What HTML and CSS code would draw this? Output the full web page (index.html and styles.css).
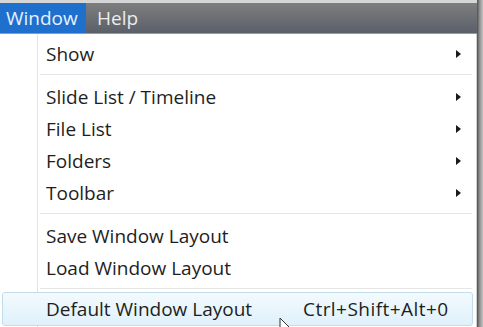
FILE: index.html
```html
<!doctype html>
<html lang="en">
    <head>
        <meta charset="UTF-8">
        <title>Window menu</title>
        <link rel="stylesheet" href="styles.css">
    </head>
    <body>
        <div class="screen">
            <div class="window">
                <div class="menubar">
                    <span class="menubar-item active">Window</span>
                    <span class="menubar-item">Help</span>
                </div>
                <div class="menu">
                    <div class="menu-item">
                        <span class="label">Show</span>
                        <span class="submenu-arrow"></span>
                    </div>
                    <div class="separator"></div>
                    <div class="menu-item">
                        <span class="label">Slide List / Timeline</span>
                        <span class="submenu-arrow"></span>
                    </div>
                    <div class="menu-item">
                        <span class="label">File List</span>
                        <span class="submenu-arrow"></span>
                    </div>
                    <div class="menu-item">
                        <span class="label">Folders</span>
                        <span class="submenu-arrow"></span>
                    </div>
                    <div class="menu-item">
                        <span class="label">Toolbar</span>
                        <span class="submenu-arrow"></span>
                    </div>
                    <div class="separator"></div>
                    <div class="menu-item">
                        <span class="label">Save Window Layout</span>
                    </div>
                    <div class="menu-item">
                        <span class="label">Load Window Layout</span>
                    </div>
                    <div class="separator short"></div>
                    <div class="menu-item hover">
                        <span class="label wide">Default Window Layout</span>
                        <span class="shortcut">Ctrl+Shift+Alt+0</span>
                        <!-- pointeur de la souris -->
                        <svg class="cursor" width="14" height="20" viewBox="0 0 14 20">
                            <path d="M1 1 L1 16 L4.5 12.5 L7 18 L9 17 L6.5 11.5 L11.5 11.5 Z" fill="#fff" stroke="#333" stroke-width="1"/>
                        </svg>
                    </div>
                </div>
            </div>
            <div class="edge"></div>
        </div>
    </body>
</html>
```

FILE: styles.css
```css
* {
    box-sizing: border-box;
}
html, body {
    margin: 0;
    padding: 0;
    background: #fff;
}
body {
    font-family: "Open Sans", "Noto Sans", sans-serif;
    font-size: 19px;
    color: #1e1e1e;
    width: 483px;
    height: 327px;
    overflow: hidden;
}
.screen {
    display: flex;
    height: 327px;
}
.window {
    width: 477px;
    display: flex;
    flex-direction: column;
}
.edge {
    flex: 1;
    background: linear-gradient(to right, #4e4e4e, #8c8c8c 40%, #c4c4c4);
}
.menubar {
    height: 34px;
    display: flex;
    border-top: 3px solid #d6d6d6;
    border-bottom: 1px solid #9a9a9a;
    background: linear-gradient(#7e7e7e, #5a606a);
}
.menubar-item {
    padding: 0 6px 0 11px;
    line-height: 30px;
    color: #ececec;
    font-size: 19px;
}
.menubar-item.active {
    background: #1f6fcc;
    color: #e4f2ff;
    width: 86px;
    padding-left: 6px;
}
.menu {
    flex: 1;
    position: relative;
    padding-top: 4px;
    border-right: 1px solid #d0d0d0;
    background: linear-gradient(to right, #fff 37px, #e3e3e3 37px, #e3e3e3 38px, #fff 38px);
}
.menu-item {
    display: flex;
    align-items: center;
    height: 32px;
    padding-left: 46px;
    padding-right: 15px;
}
.submenu-arrow {
    margin-left: auto;
    width: 0;
    height: 0;
    border-left: 5px solid #1a1a1a;
    border-top: 4px solid transparent;
    border-bottom: 4px solid transparent;
}
.separator {
    height: 11px;
    margin-left: 40px;
    margin-right: 4px;
    background: linear-gradient(#fff 4px, #e6e6e6 4px, #e6e6e6 5px, #fff 5px);
}
.separator.short {
    height: 8px;
}
.menu-item.hover {
    position: relative;
    height: 34px;
    margin-left: 2px;
    margin-right: 3px;
    padding-left: 43px;
    padding-bottom: 1px;
    border: 1px solid #c3dcec;
    border-radius: 3px;
    background: linear-gradient(#f3fafe, #dff1fb);
}
.label.wide {
    width: 257px;
}
.shortcut {
    letter-spacing: 0.45px;
}
.cursor {
    position: absolute;
    left: 276px;
    top: 24px;
}
```
